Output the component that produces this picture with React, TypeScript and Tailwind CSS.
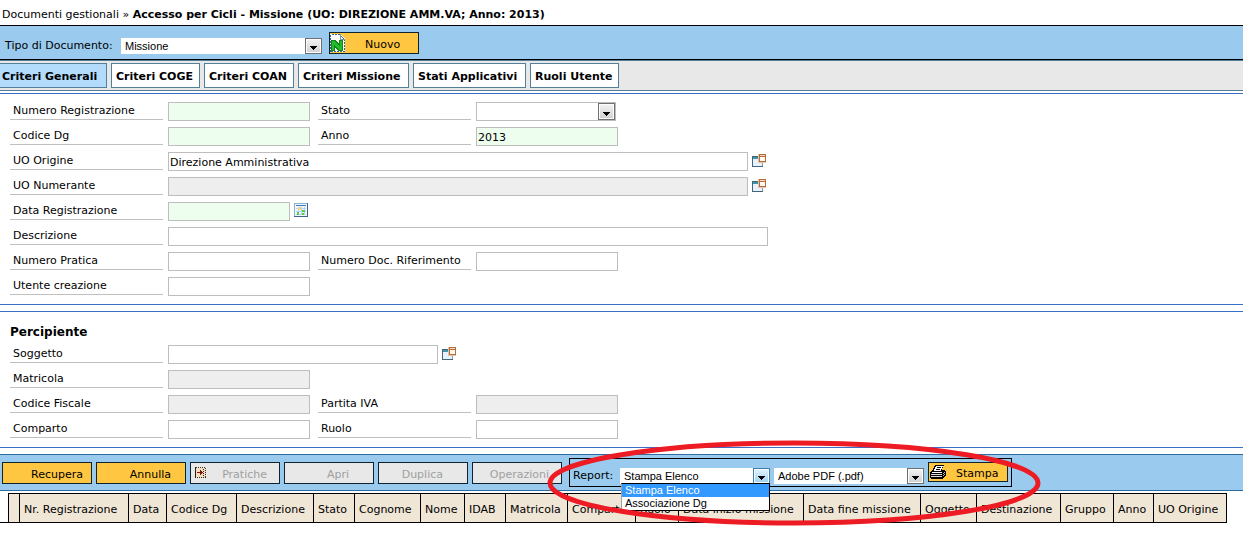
import { useState } from "react"

const tabs = [
  { label: "Criteri Generali", width: "w-[107px]" },
  { label: "Criteri COGE", width: "w-[89px]" },
  { label: "Criteri COAN", width: "w-[90px]" },
  { label: "Criteri Missione", width: "w-[111px]" },
  { label: "Stati Applicativi", width: "w-[113px]" },
  { label: "Ruoli Utente", width: "w-[89px]" },
]

const columns = [
  { label: "", width: "w-[11px]" },
  { label: "Nr. Registrazione", width: "w-[109px]" },
  { label: "Data", width: "w-[38px]" },
  { label: "Codice Dg", width: "w-[70px]" },
  { label: "Descrizione", width: "w-[77px]" },
  { label: "Stato", width: "w-[41px]" },
  { label: "Cognome", width: "w-[66px]" },
  { label: "Nome", width: "w-[44px]" },
  { label: "IDAB", width: "w-[41px]" },
  { label: "Matricola", width: "w-[62px]" },
  { label: "Comparto", width: "w-[68px]" },
  { label: "Ruolo", width: "w-[43px]" },
  { label: "Data inizio missione", width: "w-[125px]" },
  { label: "Data fine missione", width: "w-[117px]" },
  { label: "Oggetto", width: "w-[56px]" },
  { label: "Destinazione", width: "w-[84px]" },
  { label: "Gruppo", width: "w-[53px]" },
  { label: "Anno", width: "w-[40px]" },
  { label: "UO Origine", width: "w-[73px]" },
]

const reports = ["Stampa Elenco", "Associazione Dg"]

function Arrow({ active = false }: { active?: boolean }) {
  return (
    <span
      className={`pointer-events-none absolute right-0 top-0 flex h-full w-[17px] items-center justify-center border bg-linear-to-b ${
        active ? "border-[#3c7fb1] from-[#e5f4fc] to-[#98d1ef]" : "border-[#707070] from-[#f4f4f4] to-[#cfcfcf]"
      } shadow-[inset_0_0_0_1px_#fcfcfc]`}
    >
      <svg width="7" height="4" viewBox="0 0 7 4" className="mt-1" shapeRendering="crispEdges">
        <path d="M0 0h7v1h-1v1h-1v1h-1v1h-1v-1h-1v-1h-1v-1h-1z" />
      </svg>
    </span>
  )
}

function LookupIcon() {
  return (
    <svg width="14" height="13" viewBox="0 0 14 13" shapeRendering="crispEdges">
      <rect x="0" y="2" width="11" height="11" fill="#456477" />
      <rect x="1" y="3" width="9" height="2" fill="#3f94ad" />
      <rect x="1" y="5" width="9" height="7" fill="#e8f2ff" />
      <path d="M10 8h1v4h-1z" fill="#8d9ba6" />
      <rect x="6" y="0" width="8" height="9" fill="#e3c4aa" />
      <rect x="7" y="0" width="7" height="8" fill="#b66d38" />
      <rect x="8" y="1" width="5" height="1" fill="#f3d9c4" />
      <rect x="8" y="3" width="5" height="4" fill="#fffaf4" />
    </svg>
  )
}

function CalendarIcon() {
  return (
    <svg width="14" height="14" viewBox="0 0 14 14" shapeRendering="crispEdges">
      <rect width="14" height="14" fill="#42648c" />
      <path d="M0 0h13v1H1v12H0z" fill="#8fb0cf" />
      <rect x="1" y="1" width="12" height="12" fill="#eef6ff" />
      <rect x="2" y="2" width="10" height="1" fill="#3a78c4" />
      <path d="M2 5h10v1H2zM2 8h10v1H2zM2 11h10v1H2zM4 4h1v8H4zM7 4h1v8H7zM10 4h1v8h-1z" fill="#b9d3ef" />
      <rect x="4" y="4" width="3" height="3" fill="#f5d583" />
      <path d="M8 7h3v2H8zM3 9h2v3H3zM8 10h2v2H8z" fill="#55cf45" />
    </svg>
  )
}

function NewIcon() {
  return (
    <svg width="15" height="18" viewBox="0 0 15 18" shapeRendering="crispEdges">
      <path d="M0 0h10l5 5v13H0z" fill="#fff" />
      <path d="M.5 17.5V.5h9l5 5v12z" fill="none" stroke="#36648b" strokeDasharray="2 1" />
      <path d="M10 0v5h5" fill="none" stroke="#7794ad" />
      <path d="M1 6h5l3 4V6h4v11H8l-3-4v4H1z" fill="#17851c" />
      <path d="M2 7h3l5 6V7h2v9H9L4 10v6H2z" fill="#22bd2c" />
    </svg>
  )
}

function FolderArrowIcon() {
  return (
    <svg width="11" height="11" viewBox="0 0 11 11" shapeRendering="crispEdges">
      <rect x=".5" y=".5" width="10" height="10" fill="#f0dfc0" stroke="#3a3020" strokeDasharray="1 1" />
      <path d="M0 0h1v11H0z" fill="#222" />
      <path d="M2 5h3V3h1v1h1v1h1v1H7v1H6v1H5V6H2z" fill="#8b1010" />
      <path d="M8 2h1v1H8zM8 4h1v1H8zM8 6h1v1H8zM8 8h1v1H8z" fill="#222" />
    </svg>
  )
}

function PrinterIcon() {
  return (
    <svg width="16" height="14" viewBox="0 0 16 14" shapeRendering="crispEdges">
      <path d="M5 0h9v1h-1v2h-1v2h3v1h1v5h-1v1h-1v1h-1v1H1v-1H0V7h1V6h1V5h1V3h1V1h1z" />
      <path d="M6 1h7v1h-1v2h-1v2H4V4h1V2h1z" fill="#fff" />
      <path d="M7 2h4v1H7zM6 4h4v1H6z" />
      <path d="M2 7h10v1H2z" fill="#fff" />
      <path d="M1 9h11v1H1zM1 11h11v1H1z" fill="#d8d8d8" />
      <path d="M13 8h1V7h1v1h-1v1h-1zM13 10h1V9h1v1h-1v1h-1z" fill="#b8b8b8" />
    </svg>
  )
}

type FieldProps = {
  id: string
  label: string
  width?: string
  color?: string
  value?: string
  readOnly?: boolean
}

function FieldLabel({ id, label }: { id: string; label: string }) {
  return (
    <label htmlFor={id} className="h-[18px] w-[153px] shrink-0 border-b border-[#c0c0c0] pl-[3px] leading-[18px]">
      {label}
    </label>
  )
}

function Field({ id, label, width = "w-[142px]", color = "bg-white", value = "", readOnly = false }: FieldProps) {
  return (
    <>
      <FieldLabel id={id} label={label} />
      <input
        id={id}
        type="text"
        defaultValue={value}
        readOnly={readOnly}
        className={`ml-[5px] h-[19px] shrink-0 border border-[#bdbdbd] px-px pt-0.5 ${width} ${color}`}
      />
    </>
  )
}

function Row({ children }: { children: React.ReactNode }) {
  return <div className="flex h-[25px] items-start">{children}</div>
}

function LookupButton({ label }: { label: string }) {
  return (
    <button type="button" aria-label={label} className="ml-1 mt-0.5">
      <LookupIcon />
    </button>
  )
}

export default function App() {
  const [tab, setTab] = useState("Criteri Generali")
  const [report, setReport] = useState("Stampa Elenco")

  const yellowButton = "flex h-[22px] w-[90px] items-center border border-[#0d2430] bg-[#ffc641]"
  const grayButton =
    "flex h-[22px] w-[90px] items-center justify-end border border-[#0d2430] bg-[#e8e8e8] pt-1 text-[#a0a0a0]"
  const comboBox =
    "h-4 w-full appearance-none bg-white pb-0.5 pl-1 font-['Liberation_Sans',Arial,sans-serif] leading-4 outline-none"

  return (
    <div className="overflow-hidden bg-white pb-2 font-['DejaVu_Sans',Verdana,sans-serif] text-[11px] leading-4 whitespace-nowrap text-black">
      <header className="h-[25px] pt-[7px] pl-0.5">
        Documenti gestionali » <strong>Accesso per Cicli - Missione (UO: DIREZIONE AMM.VA; Anno: 2013)</strong>
      </header>

      <div className="flex h-[35px] items-start border-y border-black bg-[#9acbee] pt-1.5 pl-[5px]">
        <label htmlFor="tipo" className="mt-1.5 w-[116px]">
          Tipo di Documento:
        </label>
        <div className="relative mt-1.5 h-4 w-[201px]">
          <select id="tipo" className={comboBox}>
            <option>Missione</option>
          </select>
          <Arrow />
        </div>
        <button type="button" className={`${yellowButton} ml-[7px]`}>
          <NewIcon />
          <span className="ml-5 pt-1">Nuovo</span>
        </button>
      </div>

      <nav className="flex h-[31px] gap-1 border-y border-[#52809b] bg-[#e8e8e8] pt-0.5">
        {tabs.map((item) => (
          <button
            key={item.label}
            type="button"
            onClick={() => setTab(item.label)}
            className={`h-[25px] shrink-0 border border-[#52809b] pt-0.5 pl-1 text-left font-bold first:border-l-0 first:pl-0.5 ${item.width} ${
              tab === item.label ? "bg-[#b3dcfc]" : "bg-white"
            }`}
          >
            {item.label}
          </button>
        ))}
      </nav>

      <form>
        <section className="mt-0.5 border-y border-[#3a6fc8] pt-2 pb-0.5 pl-2.5">
          <Row>
            <Field id="numReg" label="Numero Registrazione" color="bg-[#edfeef]" />
            <div className="w-2" />
            <FieldLabel id="stato" label="Stato" />
            <div className="relative ml-[5px] h-[19px] w-[140px] border border-[#bdbdbd]">
              <select id="stato" className="h-full w-full appearance-none outline-none" />
              <Arrow />
            </div>
          </Row>
          <Row>
            <Field id="codice" label="Codice Dg" color="bg-[#edfeef]" />
            <div className="w-2" />
            <Field id="anno" label="Anno" color="bg-[#edfeef]" value="2013" />
          </Row>
          <Row>
            <Field id="uoOrigine" label="UO Origine" width="w-[580px]" value="Direzione Amministrativa" />
            <LookupButton label="Cerca UO Origine" />
          </Row>
          <Row>
            <Field id="uoNumerante" label="UO Numerante" width="w-[580px]" color="bg-[#eeeeee]" readOnly />
            <LookupButton label="Cerca UO Numerante" />
          </Row>
          <Row>
            <Field id="dataReg" label="Data Registrazione" width="w-[122px]" color="bg-[#edfeef]" />
            <button type="button" aria-label="Calendario" className="ml-1 mt-px">
              <CalendarIcon />
            </button>
          </Row>
          <Row>
            <Field id="descrizione" label="Descrizione" width="w-[600px]" />
          </Row>
          <Row>
            <Field id="pratica" label="Numero Pratica" />
            <div className="w-2" />
            <Field id="docRif" label="Numero Doc. Riferimento" />
          </Row>
          <Row>
            <Field id="utente" label="Utente creazione" />
          </Row>
        </section>

        <section className="mt-1.5 border-y border-[#3a6fc8] pt-3 pb-0.5 pl-2.5">
          <h2 className="h-[21px] text-xs font-bold">Percipiente</h2>
          <Row>
            <Field id="soggetto" label="Soggetto" width="w-[270px]" />
            <LookupButton label="Cerca Soggetto" />
          </Row>
          <Row>
            <Field id="matricola" label="Matricola" color="bg-[#eeeeee]" readOnly />
          </Row>
          <Row>
            <Field id="cf" label="Codice Fiscale" color="bg-[#eeeeee]" readOnly />
            <div className="w-2" />
            <Field id="iva" label="Partita IVA" color="bg-[#eeeeee]" readOnly />
          </Row>
          <Row>
            <Field id="comparto" label="Comparto" />
            <div className="w-2" />
            <Field id="ruolo" label="Ruolo" />
          </Row>
        </section>
      </form>

      <div className="relative mt-1.5">
        <div className="flex h-[37px] items-start border-y border-[#2f6da0] bg-[#9acbee] pl-0.5">
          <div className="mt-[7px] flex gap-1">
            <button type="button" className={`${yellowButton} justify-end pt-1 pr-2`}>
              Recupera
            </button>
            <button type="button" className={`${yellowButton} justify-end pt-1 pr-3.5`}>
              Annulla
            </button>
            <button type="button" disabled className={`${grayButton} pr-3`}>
              <span className="mr-auto mb-1.5 ml-1">
                <FolderArrowIcon />
              </span>
              Pratiche
            </button>
            <button type="button" disabled className={`${grayButton} pr-6`}>
              Apri
            </button>
            <button type="button" disabled className={`${grayButton} pr-6`}>
              Duplica
            </button>
            <button type="button" disabled className={`${grayButton} pr-3`}>
              Operazioni
            </button>
          </div>

          <div className="mt-[3px] ml-[7px] flex h-[29px] w-[443px] items-start border border-black pt-[3px] pl-[3px]">
            <label htmlFor="report" className="mt-1.5 w-[47px]">
              Report:
            </label>
            <div className="relative mt-1.5 h-4 w-[150px]">
              <select id="report" value={report} onChange={(e) => setReport(e.target.value)} className={comboBox}>
                {reports.map((r) => (
                  <option key={r}>{r}</option>
                ))}
              </select>
              <Arrow active />
              <ul className="absolute top-[15px] left-px z-10 w-[149px] border border-black border-l-[#a0a0a0] bg-white font-['Liberation_Sans',Arial,sans-serif] leading-[13px]">
                {reports.map((r) => (
                  <li
                    key={r}
                    onClick={() => setReport(r)}
                    className={`pl-[3px] ${report === r ? "bg-[#3399ff] text-white" : ""}`}
                  >
                    {r}
                  </li>
                ))}
              </ul>
            </div>
            <div className="relative mt-1.5 ml-1 h-4 w-[150px]">
              <select aria-label="Formato" className={comboBox}>
                <option>Adobe PDF (.pdf)</option>
              </select>
              <Arrow />
            </div>
            <button type="button" className="ml-1 flex h-5 w-20 items-center border border-[#0d2430] bg-[#ffc641] pl-px">
              <PrinterIcon />
              <span className="ml-2.5 pt-1">Stampa</span>
            </button>
          </div>
        </div>

        <div className="mt-0.5 flex">
          <div className="w-2 shrink-0 border-b border-black" />
          <table className="w-[1219px] shrink-0 table-fixed border-separate border-spacing-0 border-t border-l border-black">
            <thead>
              <tr>
                {columns.map((col) => (
                  <th
                    key={col.label}
                    className={`h-[29px] border-r border-b border-black bg-[#f0e6d6] p-0 pt-1 pl-1 text-left font-normal ${col.width}`}
                  >
                    {col.label}
                  </th>
                ))}
              </tr>
            </thead>
          </table>
        </div>

        <svg
          className="pointer-events-none absolute -top-4 left-[544px] z-20"
          width="500"
          height="92"
          viewBox="0 0 500 92"
          fill="none"
        >
          <ellipse cx="250" cy="45" rx="244" ry="40" stroke="#ed1c24" strokeWidth="5" />
        </svg>
      </div>
    </div>
  )
}
